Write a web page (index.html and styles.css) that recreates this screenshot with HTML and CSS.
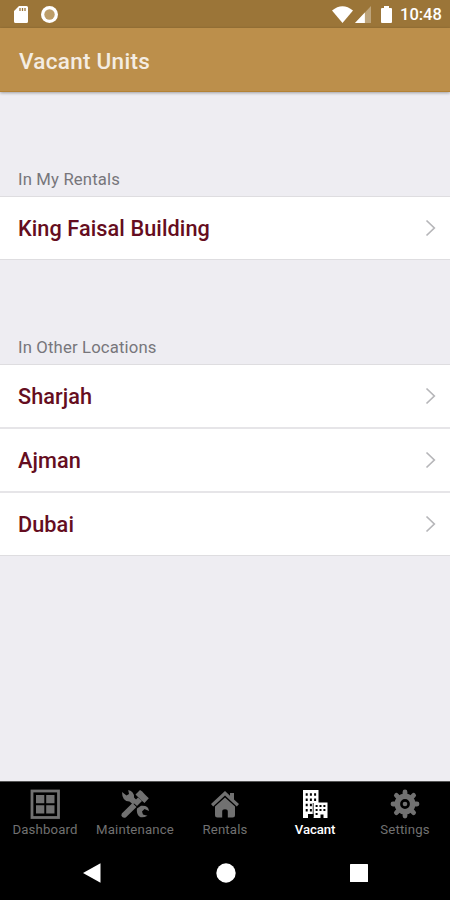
FILE: index.html
```html
<!DOCTYPE html>
<html lang="en">
<head>
<meta charset="utf-8">
<title>Vacant Units</title>
<link rel="stylesheet" href="styles.css">
</head>
<body>
<div class="screen">
  <div class="status">
    <svg class="sd" width="14" height="17" viewBox="0 0 14 17"><path d="M5 0h7.500a1.500 1.500 0 0 1 1.500 1.500v14a1.500 1.500 0 0 1-1.500 1.500h-11A1.500 1.500 0 0 1 0 15.500V5z" fill="#fff"/><path d="M6 2v3M8.500 2v3M11 2v3" stroke="#9b7538" stroke-width="1.300"/></svg>
    <svg class="ring" width="17" height="17" viewBox="0 0 17 17"><circle cx="8.500" cy="8.500" r="8.500" fill="#fff"/><circle cx="8.500" cy="8.500" r="5.200" fill="#bd9d68"/></svg>
    <svg class="wifi" width="21" height="17" viewBox="0 0 22 17" preserveAspectRatio="none"><path d="M0 4.500Q11-4.200 22 4.500L11 17z" fill="#fff"/></svg>
    <svg class="signal" width="16" height="17" viewBox="0 0 17 17" preserveAspectRatio="none"><path d="M17 0v17H0z" fill="#bda47b"/><path d="M10.500 6.500V17H0z" fill="#fff"/></svg>
    <svg class="battery" width="11" height="17" viewBox="0 0 11 17"><path d="M3 0h5v2h2q1 0 1 1v13q0 1-1 1H1q-1 0-1-1V3q0-1 1-1h2z" fill="#fff"/></svg>
    <span class="clock">10:48</span>
  </div>
  <header class="header"><h1 class="title">Vacant Units</h1></header>
  <main class="content">
    <h2 class="section">In My Rentals</h2>
    <ul class="list">
      <li class="row"><span>King Faisal Building</span><svg class="chevron" width="11" height="18" viewBox="0 0 11 18"><path d="M1.500 1.500L9.300 9l-7.800 7.500"/></svg></li>
    </ul>
    <h2 class="section">In Other Locations</h2>
    <ul class="list">
      <li class="row"><span>Sharjah</span><svg class="chevron" width="11" height="18" viewBox="0 0 11 18"><path d="M1.500 1.500L9.300 9l-7.800 7.500"/></svg></li>
      <li class="row"><span>Ajman</span><svg class="chevron" width="11" height="18" viewBox="0 0 11 18"><path d="M1.500 1.500L9.300 9l-7.800 7.500"/></svg></li>
      <li class="row last"><span>Dubai</span><svg class="chevron" width="11" height="18" viewBox="0 0 11 18"><path d="M1.500 1.500L9.300 9l-7.800 7.500"/></svg></li>
    </ul>
  </main>
  <nav class="tabs">
    <div class="tab">
      <svg width="30" height="30" viewBox="0 0 30 30"><rect x="2" y="2" width="26.500" height="26.500" fill="none" stroke="currentColor" stroke-width="2.800"/><path d="M6 6h8.300v8.300H6zM16.200 6h8.300v8.300h-8.300zM6 16.200h8.300v8.300H6zM16.200 16.200h8.300v8.300h-8.300z" fill="currentColor"/></svg>
      <span>Dashboard</span>
    </div>
    <div class="tab">
      <svg width="30" height="30" viewBox="0 0 30 30" fill="currentColor"><path d="M2 3L6.500 6.500 9 5 8.200 1Q14.500 2.500 14 8.500l3 3-4 4-3.500-3Q2 12.500 2 3z"/><path d="M17 19.500l4-2.700q7.500-.8 8 5.200l-4.500-2-2.500 2.500 1 3 4.500 1.200q-7.500 4-10-1.700-1-2.500-.5-5.500z"/><path d="M1.800 24.500L12.500 14l4 4L6 28.300q-2 1.200-3.700-.3t-.5-3.500z"/><path d="M13 13.500l5-5 4 3.500-5 5z"/><path d="M15.500 5.500L20 1q2.500 1 4 3.500 1.500 1.500 4.800 4.700L24.500 14 21 11z"/></svg>
      <span>Maintenance</span>
    </div>
    <div class="tab">
      <svg width="30" height="30" viewBox="0 0 30 30" fill="currentColor"><path d="M15 2l5 4.800V4h4v6.500l5 4.500-2.200 2.600L15 6.500 3.200 17.600 1 15z"/><path d="M15 8.500l10 9v8.500q0 2.500-2.500 2.500h-4.700v-6q0-2.300-2.800-2.300t-2.800 2.300v6H7.500Q5 28.500 5 26v-8.500z"/></svg>
      <span>Rentals</span>
    </div>
    <div class="tab active">
      <svg width="30" height="30" viewBox="0 0 30 30"><path d="M3 1h15.500v12.500H27.500V29h-4v-3.500h-3V29h-7v-4H8v4H3z" fill="currentColor"/><path d="M5.700 4.300h2v2.400h-2zM9.900 4.300h2v2.400h-2zM14.100 4.300h2v2.400h-2zM5.700 9.500h2v2.400h-2zM9.900 9.500h2v2.400h-2zM14.100 9.500h2v2.400h-2zM5.700 14.800h2v2.400h-2zM9.900 14.800h2v2.400h-2zM5.700 20h2v2.400h-2zM9.900 20h2v2.400h-2z"/><path d="M13.200 14v14.500" stroke="#000" stroke-width=".8"/><path d="M15.600 16h2v2h-2zM19.500 16h2v2h-2zM23.400 16h2v2h-2zM15.600 20h2v2h-2zM19.500 20h2v2h-2zM23.400 20h2v2h-2zM15.600 24h2v2h-2z"/></svg>
      <span>Vacant</span>
    </div>
    <div class="tab">
      <svg width="30" height="30" viewBox="0 0 30 30"><circle cx="15" cy="15" r="7.700" fill="none" stroke="currentColor" stroke-width="5.600"/><path d="M15 3v3M15 24v3M3 15h3M24 15h3M6.400 6.400l2.600 2.600M21 21l2.600 2.600M6.400 23.600L9 21M21 9l2.600-2.600" stroke="currentColor" stroke-width="4.800" stroke-linecap="round"/><circle cx="15" cy="15" r="2.300" fill="currentColor"/></svg>
      <span>Settings</span>
    </div>
  </nav>
  <div class="system">
    <svg width="18" height="20" viewBox="0 0 18 20"><path d="M0 10L17.500.3v19.400z" fill="#fff"/></svg>
    <svg width="20" height="20" viewBox="0 0 20 20"><circle cx="10" cy="10" r="9.700" fill="#fff"/></svg>
    <svg width="18" height="20" viewBox="0 0 18 20"><rect y="1" width="18" height="18" rx=".5" fill="#fff"/></svg>
  </div>
</div>
</body>
</html>
```
FILE: styles.css
```css
* { box-sizing: border-box; }
body { margin: 0; font-family: Roboto, sans-serif; background: #eeedf2; }
h1, h2, ul { margin: 0; padding: 0; font-weight: 400; }
svg { display: block; flex: none; }
.screen { width: 450px; height: 900px; display: flex; flex-direction: column; overflow: hidden; }
.status { height: 28px; flex: none; display: flex; align-items: center; padding: 0 9px 0 14px; background: #9b7538; color: #fff; }
.ring { margin-left: 13px; }
.wifi { margin-left: auto; }
.signal { margin-left: 2px; }
.battery { margin-left: 10px; }
.clock { margin: 2px 0 0 8px; width: 41px; font-size: 16.500px; font-weight: 500; line-height: 20px; white-space: nowrap; }
.header { height: 64px; flex: none; display: flex; align-items: center; padding: 3px 19px 0; background: #bc8f4b; border-bottom: 1px solid #b38235; box-shadow: 0 1px 3px #0005; }
.title { color: #f4ede3; font-size: 22.500px; font-weight: 500; line-height: 30px; letter-spacing: .28px; }
.content { flex: 1; }
.section { height: 104px; padding: 78px 18px 0; color: #77767b; font-size: 16.700px; line-height: 20px; letter-spacing: .15px; }
.list { list-style: none; border-top: 1px solid #dedde0; }
.list + .section { height: 104px; padding-top: 78px; }
.row { height: 64px; display: flex; justify-content: space-between; align-items: center; padding: 0 14px 0 18px; background: #fff; border-bottom: 2px solid #e6e5e8; color: #650d20; font-size: 21.700px; font-weight: 500; letter-spacing: .07px; }
.row:last-child { height: 63px; border-bottom-width: 1px; border-color: #dedde0; }
.row span { padding-top: 1px; }
.row.last span { padding-top: 0; }
.chevron path { fill: none; stroke: #b6b6b9; stroke-width: 1.700; }
.tabs { height: 64px; flex: none; display: grid; grid-template-columns: repeat(5, 1fr); background: #000; border-top: 1px solid #555; color: #717171; }
.tab { display: flex; flex-direction: column; align-items: center; padding-top: 7px; font-size: 13.200px; font-weight: 400; line-height: 16px; letter-spacing: .15px; }
.tab span { margin-top: 3px; }
.active { color: #fff; font-weight: 500; letter-spacing: -.1px; }
.system { height: 55px; flex: none; display: flex; justify-content: space-between; align-items: center; padding: 1px 82px 0 83px; background: #000; }
```
